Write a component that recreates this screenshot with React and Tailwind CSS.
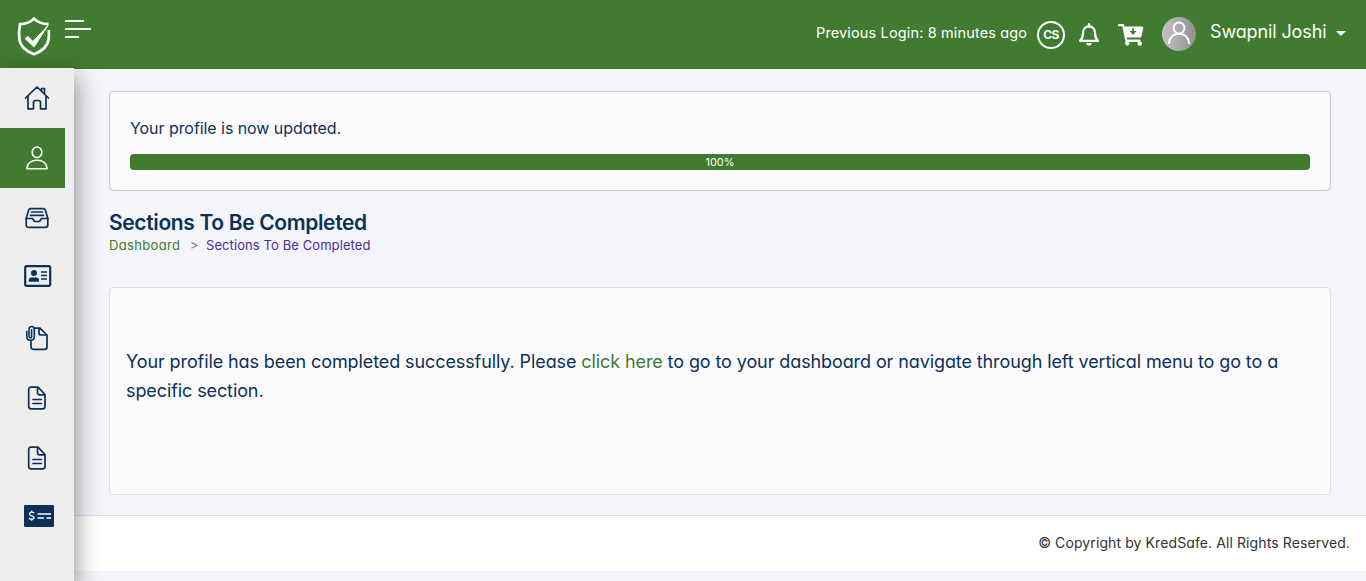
import React from 'react';

function ShieldLogo() {
  return (
    <svg width="34" height="40" viewBox="0 0 34 40" fill="none" stroke="#fff">
      <path d="M31.500 8.200C25.500 8 20.500 6.200 17 2.600C13.500 6.200 8.500 8 3 8.200C2 14 1.800 19 2.300 23C3.200 30.500 8.500 35 17 38.200C25.500 35 30.800 30.500 31.700 23C32 20 32 17 31.800 14" strokeWidth="2.700" />
      <path d="M8 22.500L11 20.500L16 25.500L31 9.500L17 31Z" fill="#fff" strokeWidth="1" strokeLinejoin="round" />
    </svg>
  );
}

function HomeIcon() {
  return (
    <svg width="26" height="26" viewBox="0 0 26 26" fill="none" stroke="#0b3157" strokeWidth="1.700" strokeLinejoin="round">
      <path d="M1.500 13L13 2L24.500 13M4 11V23.800H9.500V17.500Q9.500 15.500 11.500 15.500H14.500Q16.500 15.500 16.500 17.500V23.800H22V11" strokeLinecap="round" />
      <path d="M17.500 6V3.500H20.500V9" />
    </svg>
  );
}

function UserIcon() {
  return (
    <svg width="24" height="26" viewBox="0 0 24 26" fill="none" stroke="#fff" strokeWidth="1.600">
      <ellipse cx="12" cy="7.300" rx="4.800" ry="5.300" />
      <path d="M2 23.800C2 18.500 6 15.300 12 15.300S22 18.500 22 23.800Z" strokeLinejoin="round" />
    </svg>
  );
}

function InboxIcon() {
  return (
    <svg width="24" height="22" viewBox="0 0 24 22" fill="none" stroke="#0b3157" strokeWidth="1.700" strokeLinejoin="round" strokeLinecap="round">
      <path d="M1.200 11.500L3.500 3.500Q4 1.700 6 1.700H18Q20 1.700 20.500 3.500L22.800 11.500V18Q22.800 20.300 20.500 20.300H3.500Q1.200 20.300 1.200 18Z" />
      <path d="M1.200 11.500H7.500L9.500 14.500H14.500L16.500 11.500H22.800M6.500 5H17.500M5.500 8.300H18.500" />
    </svg>
  );
}

function IdCardIcon() {
  return (
    <svg width="28" height="22" viewBox="0 0 28 22" fill="none" stroke="#0b3157">
      <rect x="1.200" y="1.200" width="25" height="19.600" rx="1.500" strokeWidth="2.200" />
      <circle cx="10" cy="8" r="3" fill="#0b3157" stroke="none" />
      <path d="M4.800 16.700V15Q4.800 12.500 7.500 12.500H12.500Q15 12.500 15 15V16.700Z" fill="#0b3157" stroke="none" />
      <path d="M17 7H23M17 10.500H23M17 14H23" strokeWidth="1.500" />
    </svg>
  );
}

function ClipFileIcon() {
  return (
    <svg width="24" height="26" viewBox="0 0 24 26" fill="none" stroke="#0b3157" strokeWidth="1.700" strokeLinejoin="round" strokeLinecap="round">
      <path d="M9 3.200H15L22 10V22Q22 24.300 19.700 24.300H8.300Q6 24.300 6 22V16M14 3.200V8Q14 10 16 10H22" />
      <path d="M1.800 6.500V11.500Q1.800 15.300 5.500 15.300T9.300 11.500V4.300Q9.300 1.500 6.700 1.500T4 4.300V11.200Q4 12.800 5.300 12.800T6.600 11.200V4.800" strokeWidth="1.600" />
    </svg>
  );
}

function FileIcon() {
  return (
    <svg width="20" height="24" viewBox="0 0 20 24" fill="none" stroke="#0b3157" strokeWidth="1.700" strokeLinejoin="round" strokeLinecap="round">
      <path d="M11 1.200H4Q1.700 1.200 1.700 3.500V20.500Q1.700 22.800 4 22.800H15.700Q18 22.800 18 20.500V8.500ZM10.500 1.500V6.500Q10.500 8.800 12.800 8.800H18M6 13.500H14.300M6 17.500H14.300" />
    </svg>
  );
}

function CheckCardIcon() {
  return (
    <svg width="30" height="22" viewBox="0 0 30 22" fill="none" stroke="#fff" strokeWidth="1.300">
      <rect width="30" height="22" rx="1.300" fill="#0b3157" stroke="none" />
      <path d="M10.200 8.200Q9.500 7.200 7.700 7.200T5.500 8.900Q5.500 10.300 7.700 10.800T10 12.700Q10 14.200 7.700 14.200T5 13M7.700 5.500V7M7.700 14.200V15.700" />
      <path d="M13.500 9H27M13.500 13H20M22.500 13H27" />
    </svg>
  );
}

function BellIcon() {
  return (
    <svg width="22" height="24" viewBox="0 0 22 24" fill="none" stroke="#fff" strokeWidth="2.300" strokeLinejoin="round">
      <path d="M11 3.500C7 3.500 5 6.500 5 10C5 14 4 16 2 17.800H20C18 16 17 14 17 10C17 6.500 15 3.500 11 3.500Z" />
      <path d="M11 1.200V3.500" strokeLinecap="round" />
      <path d="M8 20H14Q13.500 22.700 11 22.700T8 20Z" fill="#fff" stroke="none" />
    </svg>
  );
}

function CartIcon() {
  return (
    <svg width="26" height="24" viewBox="0 0 26 24" fill="none">
      <path d="M0.800 1H5Q6 1 6.200 2L6.500 3.500H24Q25.500 3.500 25.200 5L23.400 13.500Q23.200 14.500 22.200 14.500H8.800L9.200 16.500H21.800Q23 16.500 22.700 18L22.500 18.500Q24 19.200 24 20.500A2.300 2.300 0 1 1 20 19H11.200A2.300 2.300 0 1 1 7.500 18.700L4.300 3.200H0.800Q0 3.200 0 2.400V1.700Q0 1 0.800 1Z" fill="#fff" />
      <path d="M14 5.500H16V8H18.500L15 12L11.500 8H14Z" fill="#417b2f" />
    </svg>
  );
}

function Avatar() {
  return (
    <svg width="34" height="34" viewBox="0 0 34 34" fill="none">
      <defs>
        <linearGradient id="avatarFill">
          <stop offset="0" stopColor="#c4c4c4" />
          <stop offset="1" stopColor="#8f8f8f" />
        </linearGradient>
      </defs>
      <circle cx="17" cy="17" r="17" fill="url(#avatarFill)" />
      <circle cx="17" cy="11" r="5.500" stroke="#fff" strokeWidth="1.900" />
      <path d="M6.700 26.800C7.500 20 11 16.700 17 16.700S26.500 20 27.300 26.800" stroke="#fff" strokeWidth="1.900" />
    </svg>
  );
}

const menu = [
  { Icon: HomeIcon, pad: '' },
  { Icon: UserIcon, pad: '', active: true },
  { Icon: InboxIcon, pad: '' },
  { Icon: IdCardIcon, pad: 'pl-px pb-1' },
  { Icon: ClipFileIcon, pad: '' },
  { Icon: FileIcon, pad: '' },
  { Icon: FileIcon, pad: '' },
  { Icon: CheckCardIcon, pad: 'pl-1 pb-1' },
];

function Header() {
  return (
    <header className="flex h-[69px] shrink-0 items-start bg-[#417b2f] text-white">
      <div className="pt-4 pl-[17px]"><ShieldLogo /></div>
      <div className="flex flex-col gap-1.5 pt-5 pl-3.5">
        <span className="h-0.5 w-[19px] bg-white" />
        <span className="h-0.5 w-[26px] bg-white" />
        <span className="h-0.5 w-3.5 bg-white" />
      </div>
      <div className="ml-auto flex items-start">
        <span className="mt-[23px] w-[221px] text-[14.5px] leading-5 tracking-[0.14px] whitespace-nowrap">Previous Login: 8 minutes ago</span>
        <span className="mt-[21px] flex size-7 items-center justify-center rounded-full border-2 border-white text-xs font-bold tracking-[-0.5px]">CS</span>
        <span className="mt-[23px] ml-[13px]"><BellIcon /></span>
        <span className="mt-[23px] ml-[18px]"><CartIcon /></span>
        <span className="mt-[17px] ml-[18px]"><Avatar /></span>
        <span className="mt-5 ml-3.5 w-[126px] text-[18px] leading-6 tracking-[-0.12px] whitespace-nowrap">Swapnil Joshi</span>
        <span className="mt-[31px] mr-5 border-x-[5px] border-t-[5px] border-x-transparent border-t-white" />
      </div>
    </header>
  );
}

export default function App() {
  return (
    <div className="flex h-[581px] w-[1366px] flex-col overflow-hidden bg-[#f4f5fa] font-[Inter,sans-serif] text-[#0b3157] [font-feature-settings:'cv11']">
      <Header />
      <div className="flex min-h-0 flex-1">
        <aside className="z-10 -mt-px flex w-[74px] shrink-0 flex-col bg-[#eee] shadow-[3px_8px_22px_rgba(0,0,0,0.4)]">
          {menu.map(({ Icon, pad, active }, i) => (
            <a key={i} className={`flex h-[60px] w-[65px] shrink-0 items-center justify-center ${active ? 'bg-[#417b2f]' : ''}`}>
              <span className="pl-[9px]"><span className={`block ${pad}`}><Icon /></span></span>
            </a>
          ))}
        </aside>
        <div className="flex min-w-0 flex-1 flex-col">
          <main className="flex h-[446px] shrink-0 flex-col pt-[22px] pr-[35px] pl-[35px]">
            <section className="h-[100px] rounded border border-[#c8c9cc] bg-[#fbfbfe] px-5 pt-6">
              <p className="text-[16px] leading-6 tracking-[-0.06px]">Your profile is now updated.</p>
              <div className="mt-3.5 h-4 rounded bg-[#417b2f] text-center text-[11px] leading-4 text-white">100%</div>
            </section>
            <h1 className="mt-[19px] text-[21px] leading-[25px] font-semibold tracking-[-0.36px] whitespace-nowrap">Sections To Be Completed</h1>
            <nav className="flex text-[13px] leading-5 whitespace-nowrap">
              <a className="w-[81px] tracking-[0.33px] text-[#417b2f]">Dashboard</a>
              <span className="w-4 text-[#6c757d]">&gt;</span>
              <a className="tracking-[0.09px] text-[#4b2c9b]">Sections To Be Completed</a>
            </nav>
            <section className="mt-8 h-[208px] rounded border border-[#dfe0e3] bg-[#fbfbfe] pt-[59px] pl-4 text-[18px] leading-[29px] tracking-[-0.1px] whitespace-nowrap">
              <p>Your profile has been completed successfully. Please <a className="text-[#417b2f]">click here</a> to go to your dashboard or navigate through left vertical menu to go to a</p>
              <p>specific section.</p>
            </section>
          </main>
          <footer className="flex h-14 items-center justify-end border-t border-[#dedfe4] bg-white pr-4 pb-0.5 text-[14px] tracking-[0.1px] text-[#333]">© Copyright by KredSafe. All Rights Reserved.</footer>
        </div>
      </div>
    </div>
  );
}
